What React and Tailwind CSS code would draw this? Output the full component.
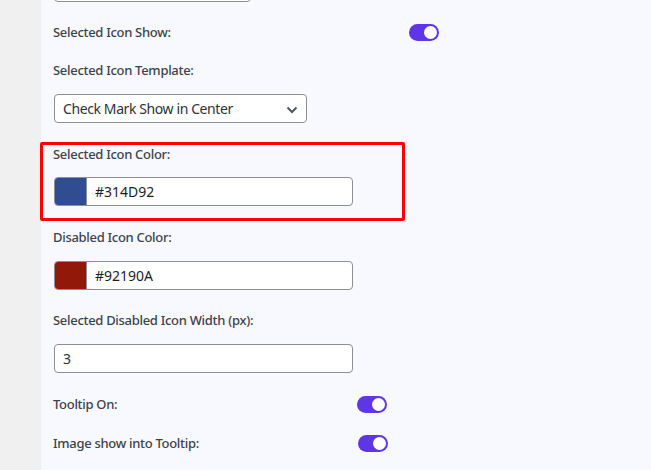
import React from 'react';

const Toggle = () => (
    <div className="w-[30px] h-[17px] rounded-full bg-[#5f36e6] flex items-center justify-end pr-[2px] shrink-0">
        <div className="w-[13px] h-[13px] rounded-full bg-white" />
    </div>
);

const Label = ({ children, className = '' }) => (
    <div className={`h-[20px] leading-[20px] text-[13px] font-medium tracking-[-0.3px] text-[#3c434a] ${className}`}>{children}</div>
);

const ColorField = ({ color, value }) => (
    <div className="flex w-[299px] h-[29px] border border-[#8c8f94] rounded-[4px] bg-white overflow-hidden">
        <div className="w-[32px] h-full border-r border-[#8c8f94]" style={{ backgroundColor: color }} />
        <div className="flex items-center pl-[8px] text-[14px] text-[#1e1e1e]">{value}</div>
    </div>
);

const App = () => {
    return (
        <div className="flex w-full h-[470px] overflow-hidden" style={{ fontFamily: '"Noto Sans", "Open Sans", sans-serif' }}>
            {/* admin sidebar gap */}
            <div className="w-[41px] shrink-0 bg-[#f0f0f1]" />

            <div className="flex-1 bg-[#f8f9ff] pl-[12px] flex flex-col">
                {/* previous field, cut off at the top */}
                <div className="-mt-[27px] ml-[1px] w-[197px] h-[29px] border border-[#8c8f94] rounded-[4px] bg-white" />

                <div className="mt-[22px] flex items-center h-[17px]">
                    <div className="w-[356px] text-[13px] font-medium tracking-[-0.3px] text-[#3c434a]">Selected Icon Show:</div>
                    <Toggle />
                </div>

                <Label className="mt-[19px]">Selected Icon Template:</Label>
                <div className="mt-[14px] ml-[1px] w-[253px] h-[29px] border border-[#8c8f94] rounded-[4px] bg-white flex items-center justify-between pl-[8px] pr-[8px] text-[14px] tracking-[-0.4px] text-[#2c3338]">
                    <span>Check Mark Show in Center</span>
                    <svg width="12" height="8" viewBox="0 0 12 8" className="mt-[3px]">
                        <path d="M1.5 1.5 L6 6 L10.5 1.5" fill="none" stroke="#50575e" strokeWidth="2" />
                    </svg>
                </div>

                {/* highlighted field */}
                <div className="mt-[19px] -ml-[13px] w-[365px] border-[3px] border-[#ff0000] rounded-[2px] pl-[10px] pb-[12px]">
                    <div className="h-[18px] leading-[18px] text-[13px] font-medium tracking-[-0.3px] text-[#3c434a]">Selected Icon Color:</div>
                    <div className="mt-[14px] ml-[1px]">
                        <ColorField color="#314D92" value="#314D92" />
                    </div>
                </div>

                <Label className="mt-[6px]">Disabled Icon Color:</Label>
                <div className="mt-[14px] ml-[1px]">
                    <ColorField color="#92190A" value="#92190A" />
                </div>

                <Label className="mt-[20px]">Selected Disabled Icon Width (px):</Label>
                <div className="mt-[14px] ml-[1px] w-[299px] h-[29px] border border-[#8c8f94] rounded-[4px] bg-white flex items-center pl-[8px] text-[14px] text-[#2c3338]">
                    3
                </div>

                <div className="mt-[23px] flex items-center h-[17px]">
                    <div className="w-[304px] text-[13px] font-medium tracking-[-0.3px] text-[#3c434a]">Tooltip On:</div>
                    <Toggle />
                </div>

                <div className="mt-[22px] flex items-center h-[17px]">
                    <div className="w-[305px] text-[13px] font-medium tracking-[-0.3px] text-[#3c434a]">Image show into Tooltip:</div>
                    <Toggle />
                </div>
            </div>
        </div>
    );
};

export default App;
